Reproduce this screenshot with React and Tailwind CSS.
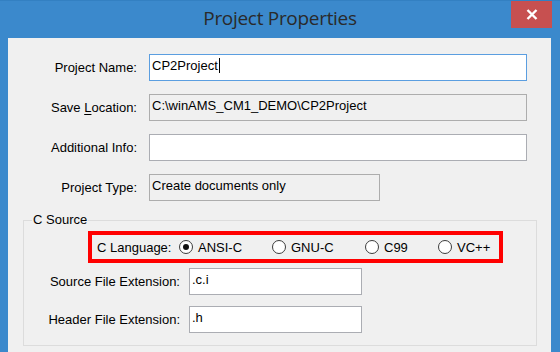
import React from "react";

const font = { fontFamily: '"Liberation Sans", Arial, sans-serif' };

function Radio({ checked, label, w }) {
  return (
    <div className={`flex items-center gap-[5px] ${w}`}>
      <span className="flex h-[14px] w-[14px] items-center justify-center rounded-full border border-[#3c3c3c] bg-white">
        {checked && <span className="h-[6px] w-[6px] rounded-full bg-[#111]" />}
      </span>
      <span className="text-[13px] leading-[15px] text-black">{label}</span>
    </div>
  );
}

function Row({ label, children, labelW, gap }) {
  return (
    <div className="flex items-center">
      <div className={`${labelW} text-right text-[13px] leading-[15px] text-black`}>{label}</div>
      <div className={gap}>{children}</div>
    </div>
  );
}

function Field({ value, w, bg = "bg-white", border = "border-[#abadb3]", cursor }) {
  return (
    <div className={`${w} h-[27px] border ${border} ${bg} flex items-start px-[2px] pt-[3px] text-[13px] leading-[15px] text-black`}>
      <span className="whitespace-pre">{value}</span>
      {cursor && <span className="ml-[1px] mt-[0px] h-[15px] w-[1px] bg-black" />}
    </div>
  );
}

export default function App() {
  return (
    <div className="flex h-[352px] w-[560px] flex-col bg-[#3b89cc]" style={font}>
      <div className="relative flex h-[38px] items-center justify-center border-t border-[#3380c2]">
        <span
          className="pb-[2px] text-[19px] tracking-[-0.3px] text-[#2a2a2a]"
          style={{ fontFamily: '"Open Sans", "Noto Sans", sans-serif' }}
        >
          Project Properties
        </span>
        <div className="absolute right-[8px] top-[0px] flex h-[27px] w-[41px] items-center justify-center bg-[#c75050]">
          <svg width="12" height="11" viewBox="0 0 12 11">
            <path d="M1.5 1 L10.5 10 M10.5 1 L1.5 10" stroke="#fff" strokeWidth="2.4" />
          </svg>
        </div>
      </div>
      <div className="ml-[8px] mr-[9px] flex-1 bg-[#f0f0f0] pt-[16px]">
        <div className="flex flex-col gap-[13px]">
          <Row label="Project Name:" labelW="w-[129px]" gap="ml-[12px]">
            <Field value="CP2Project" w="w-[378px]" border="border-[#5b9ee0]" cursor />
          </Row>
          <Row
            label={
              <span>
                Save <span className="underline underline-offset-2">L</span>ocation:
              </span>
            }
            labelW="w-[129px]"
            gap="ml-[12px]"
          >
            <Field value="C:\winAMS_CM1_DEMO\CP2Project" w="w-[378px]" bg="bg-[#f0f0f0]" border="border-[#adadad]" />
          </Row>
          <Row label="Additional Info:" labelW="w-[129px]" gap="ml-[12px]">
            <Field value="" w="w-[378px]" />
          </Row>
          <Row label="Project Type:" labelW="w-[129px]" gap="ml-[12px]">
            <Field value="Create documents only" w="w-[231px]" bg="bg-[#f0f0f0]" border="border-[#adadad]" />
          </Row>
        </div>

        <div className="relative ml-[15px] mr-[14px] mt-[19px] h-[126px] border border-[#dcdcdc] pt-[10px]">
          <span className="absolute left-[8px] top-[-9px] bg-[#f0f0f0] px-[1px] text-[13px] leading-[16px] text-black">
            C Source
          </span>
          <div className="ml-[64px] flex h-[32px] w-[415px] items-center border-[4px] border-[#ff0000] pl-[5px]">
            <span className="w-[82px] text-[13px] leading-[15px] text-black">C Language:</span>
            <Radio checked label="ANSI-C" w="w-[93px]" />
            <Radio label="GNU-C" w="w-[93px]" />
            <Radio label="C99" w="w-[73px]" />
            <Radio label="VC++" w="w-[60px]" />
          </div>
          <div className="mt-[5px] flex flex-col gap-[11px]">
            <Row label="Source File Extension:" labelW="w-[156px]" gap="ml-[9px]">
              <Field value=".c.i" w="w-[173px]" />
            </Row>
            <Row label="Header File Extension:" labelW="w-[156px]" gap="ml-[9px]">
              <Field value=".h" w="w-[173px]" />
            </Row>
          </div>
        </div>
      </div>
    </div>
  );
}
